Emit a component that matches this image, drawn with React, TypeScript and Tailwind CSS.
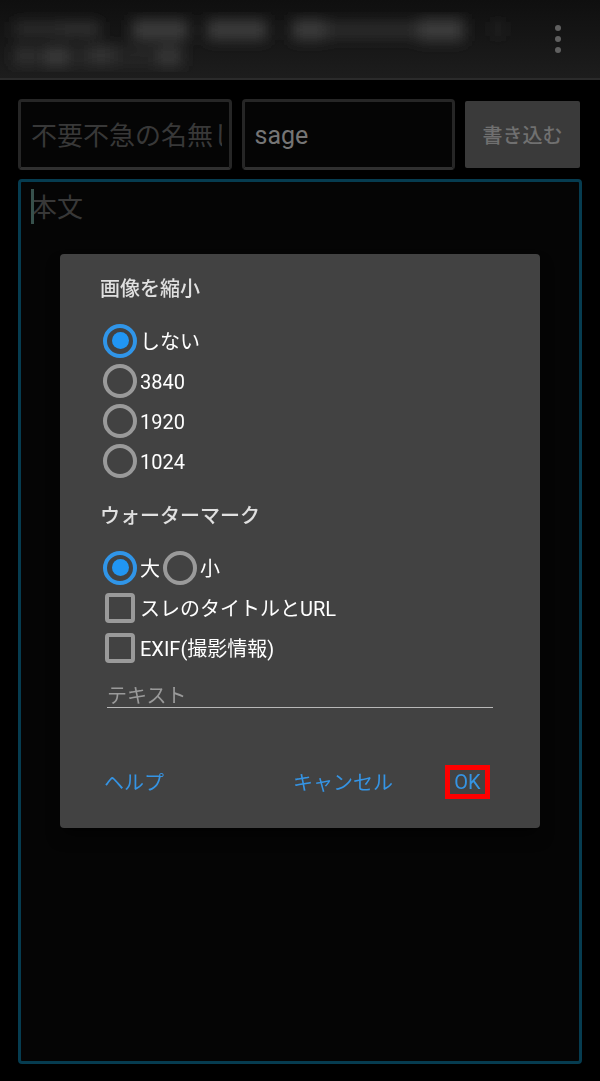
import { useState } from 'react';

const ringClass =
  "mx-[3px] grid size-[34px] shrink-0 appearance-none place-items-center rounded-full border-4 border-[#9a9a9a] before:size-[17px] before:rounded-full checked:border-[#3095e8] checked:before:bg-[#2196f3] before:content-['']";

const boxClass =
  'mx-[5px] size-[30px] shrink-0 appearance-none rounded-[4px] border-4 border-[#9a9a9a] checked:border-[#2196f3] checked:bg-[#2196f3]';

const fieldClass =
  'h-[71px] min-w-0 flex-1 rounded-sm border-3 border-[#262626] border-b-[#303030] bg-[#050505] pt-[2px] pr-[7px] pl-[10px] text-[#757575] placeholder:text-[26px] placeholder:text-[#383838]';

type RadioProps = {
  name: string;
  label: string;
  checked: boolean;
  onSelect: () => void;
};

function Radio({ name, label, checked, onSelect }: RadioProps) {
  return (
    <label className="flex h-10 items-center">
      <input type="radio" name={name} checked={checked} onChange={onSelect} className={ringClass} />
      <span className="pt-[2px]">{label}</span>
    </label>
  );
}

function Check({ label }: { label: string }) {
  return (
    <label className="flex h-10 items-center">
      <input type="checkbox" className={boxClass} />
      <span className="pt-[2px]">{label}</span>
    </label>
  );
}

function Header() {
  return (
    <header className="flex h-20 items-center justify-between border-b-2 border-[#2b2b2b] bg-linear-to-b from-[#0f0f0f] to-[#1d1d1d]">
      <svg className="h-full w-[520px] min-w-0" viewBox="0 0 520 78" aria-hidden="true">
        <defs>
          <filter id="soft" x="-20%" y="-60%" width="140%" height="220%">
            <feGaussianBlur stdDeviation="7" />
          </filter>
          <clipPath id="band">
            <rect x="0" y="12" width="520" height="60" />
          </clipPath>
        </defs>
        <g clipPath="url(#band)">
          <g filter="url(#soft)" fill="#3c3c3c">
            <rect x="14" y="22" width="86" height="14" opacity="0.6" />
            <rect x="60" y="24" width="40" height="12" opacity="0.4" />
            <rect x="132" y="20" width="56" height="20" />
            <rect x="207" y="20" width="60" height="20" />
            <rect x="292" y="20" width="34" height="20" />
            <rect x="326" y="22" width="92" height="16" opacity="0.6" />
            <rect x="418" y="19" width="46" height="22" />
            <rect x="494" y="22" width="8" height="14" opacity="0.5" />
            <rect x="14" y="46" width="170" height="20" opacity="0.35" />
            <rect x="14" y="48" width="20" height="16" opacity="0.6" />
            <rect x="44" y="48" width="24" height="18" />
            <rect x="88" y="46" width="26" height="18" opacity="0.7" />
            <rect x="158" y="48" width="22" height="18" opacity="0.9" />
          </g>
        </g>
      </svg>
      <button type="button" aria-label="メニュー" className="mr-5 grid h-12 w-11 shrink-0 place-items-center">
        <svg width="8" height="30" viewBox="0 0 8 30" fill="#606060" aria-hidden="true">
          <circle cx="4" cy="4" r="3" />
          <circle cx="4" cy="15" r="3" />
          <circle cx="4" cy="26" r="3" />
        </svg>
      </button>
    </header>
  );
}

function PostForm() {
  return (
    <form className="flex flex-1 flex-col gap-[9px] px-[18px] pt-[19px] pb-[17px]">
      <div className="flex items-center gap-[10px]">
        <input
          type="text"
          aria-label="名前"
          placeholder="不要不急の名無しさん"
          className={`${fieldClass} text-[26px]`}
        />
        <input type="text" aria-label="メール" defaultValue="sage" className={`${fieldClass} text-[25px]`} />
        <button
          type="button"
          className="mr-[2px] h-[67px] w-[115px] shrink-0 rounded-[2px] bg-[#3a3a3a] pt-[2px] text-[20px] font-medium text-[#707070]"
        >
          書き込む
        </button>
      </div>
      <div className="relative flex flex-1">
        <textarea
          aria-label="本文"
          placeholder="本文"
          className="flex-1 resize-none rounded-sm border-3 border-[#063c50] bg-[#050505] px-[10px] pt-[7px] text-[26px] leading-[38px] text-[#757575] placeholder:text-[#383838]"
        />
        <span className="absolute top-[10px] left-[13px] h-[35px] w-[3px] bg-[#37514c]" />
      </div>
    </form>
  );
}

export default function App() {
  const [size, setSize] = useState('しない');
  const [mark, setMark] = useState('大');

  return (
    <div className="flex min-h-screen flex-col bg-black font-[Roboto,'Noto_Sans_CJK_JP',sans-serif]">
      <Header />
      <PostForm />
      <div className="fixed inset-0 flex items-center justify-center">
        <div
          role="dialog"
          aria-modal="true"
          aria-label="画像を縮小"
          className="w-4/5 rounded-[4px] bg-[#424242] px-10 pb-[29px] text-[20px] leading-[30px] text-white shadow-lg shadow-black/50"
        >
          <h2 className="flex h-[67px] items-center pt-[3px] font-medium text-[#e0e0e0]">画像を縮小</h2>
          <div role="radiogroup" aria-label="画像を縮小">
            {['しない', '3840', '1920', '1024'].map((value) => (
              <Radio key={value} name="size" label={value} checked={size === value} onSelect={() => setSize(value)} />
            ))}
          </div>

          <h2 className="flex h-[67px] items-center pt-[3px] font-medium text-[#e0e0e0]">ウォーターマーク</h2>
          <div role="radiogroup" aria-label="ウォーターマーク" className="flex">
            {['大', '小'].map((value) => (
              <Radio key={value} name="mark" label={value} checked={mark === value} onSelect={() => setMark(value)} />
            ))}
          </div>
          <Check label="スレのタイトルとURL" />
          <Check label="EXIF(撮影情報)" />
          <div className="flex px-[7px]">
            <input
              type="text"
              aria-label="テキスト"
              placeholder="テキスト"
              className="h-10 min-w-0 flex-1 border-b border-[#b8b8b8] pt-[17px] placeholder:text-[#9a9a9a]"
            />
          </div>

          <div className="mt-[57px] flex items-center pr-[10px] pl-1 text-[#3594e4]">
            <button type="button" className="mr-auto pt-[2px]">
              ヘルプ
            </button>
            <button type="button" className="pt-[2px]">
              キャンセル
            </button>
            <button
              type="button"
              className="ml-[52px] flex h-[34px] w-[45px] items-center justify-center border-5 border-[#ff0000]"
            >
              OK
            </button>
          </div>
        </div>
      </div>
    </div>
  );
}
